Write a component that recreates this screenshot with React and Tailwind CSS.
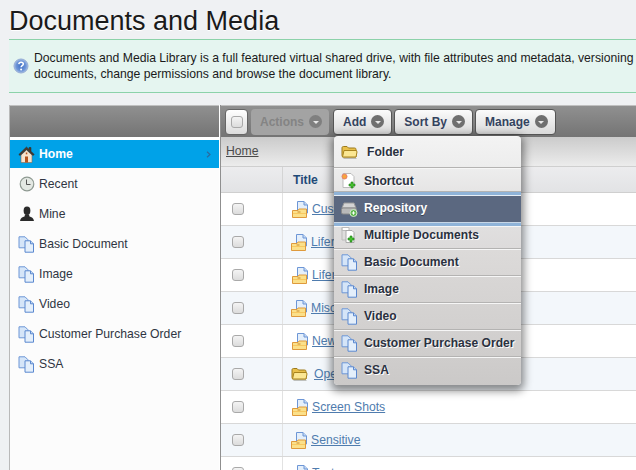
import { Fragment } from 'react';

const SIDEBAR = [
  { label: 'Recent', icon: 'clock' },
  { label: 'Mine', icon: 'person' },
  { label: 'Basic Document', icon: 'docs' },
  { label: 'Image', icon: 'docs' },
  { label: 'Video', icon: 'docs' },
  { label: 'Customer Purchase Order', icon: 'docs' },
  { label: 'SSA', icon: 'docs' },
];

const ROWS = [
  { label: 'Customer', shift: 'ml-[9px]', gap: 'ml-[4px]' },
  { label: 'Liferay', shift: 'ml-[8px]', gap: 'ml-[4px]' },
  { label: 'Liferay', shift: 'ml-[9px]', gap: 'ml-[4px]' },
  { label: 'Misc', shift: 'ml-[8px]', gap: 'ml-[4px]' },
  { label: 'New', shift: 'ml-[9px]', gap: 'ml-[4px]' },
  { label: 'Open', shift: 'ml-[8px]', gap: 'ml-[6px]', plain: true },
  { label: 'Screen Shots', shift: 'ml-[9px]', gap: 'ml-[4px]' },
  { label: 'Sensitive', shift: 'ml-[8px]', gap: 'ml-[4px]' },
  { label: 'Test', shift: 'ml-[9px]', gap: 'ml-[4px]' },
];

const MENU = [
  { label: 'Folder', icon: 'folder', cls: 'h-[32px] from-[#f3f3f3] to-[#ededed]', pad: 'pl-[1px] gap-[9px]' },
  { label: 'Shortcut', icon: 'shortcut', cls: 'h-[24px] pt-[2px] from-[#ededed] to-[#e6e5e5]' },
  { label: 'Repository', icon: 'repo', active: true },
  { label: 'Multiple Documents', icon: 'multi', cls: 'h-[23px] pb-[4px] from-[#e0dfdf] to-[#dddbdb]' },
  { label: 'Basic Document', icon: 'docs', cls: 'h-[27px] from-[#dcdad9] to-[#d9d7d6]' },
  { label: 'Image', icon: 'docs', cls: 'h-[27px] from-[#d8d6d5] to-[#d5d3d2]' },
  { label: 'Video', icon: 'docs', cls: 'h-[27px] from-[#d5d3d2] to-[#d2d0cf]' },
  { label: 'Customer Purchase Order', icon: 'docs', cls: 'h-[27px] from-[#d2d0cf] to-[#cfcdcc]' },
  { label: 'SSA', icon: 'docs', cls: 'h-[28px] pb-[3px] from-[#cfcdcc] to-[#cbc9c8]', last: true },
];

function Docs() {
  return (
    <svg width="17" height="17" viewBox="0 0 17 17" className="shrink-0">
      <path d="M1 .8h6l3 3v8H1z" fill="#d5e5f8" stroke="#6d96d6" />
      <path d="M7 4.800h5.500l3 3v8.400H7z" fill="#e4effb" stroke="#5b88cf" />
      <path d="M12.500 4.800v3h3" fill="#c3d8f3" stroke="#5b88cf" />
    </svg>
  );
}

function Folder() {
  return (
    <svg width="17" height="14" viewBox="0 0 17 14" className="shrink-0">
      <path d="M1 3c0-1 .5-1.500 1.500-1.500h3.500l1.500 1.500h6c1 0 1.500.5 1.500 1.500v7.500H2.500C1.500 12 1 11.500 1 10.500z" fill="#e9c04b" stroke="#9c7a1d" />
      <path d="M1.500 12 3 5.500h12.500L16 7l-1 5z" fill="#fbe793" stroke="#a8841f" />
      <path d="M2.500 13.500h13" stroke="#8a8a80" strokeOpacity=".5" />
    </svg>
  );
}

function DocFolder() {
  return (
    <svg width="16" height="17" viewBox="0 0 16 17" className="shrink-0">
      <path d="M5.500.5h6.500l3.500 3.500v8H5.500z" fill="#e4effb" stroke="#6d96d6" />
      <path d="M12 .5V4h3.500" fill="#c3d8f3" stroke="#6d96d6" />
      <path d="M.5 9.500h5.500l1-1.500h7.500v8.500H.5z" fill="#fbe08a" stroke="#df9a3c" />
      <path d="M1 12.500h13" stroke="#f7c860" />
      <path d="M5.500 11h3" stroke="#c98a30" />
    </svg>
  );
}

function Plus({ x = 9, y = 9 }) {
  return (
    <path
      d={`M${x + 2} ${y}h2v2h2v2h-2v2h-2v-2h-2v-2h2z`}
      fill="#47c12f"
      stroke="#1d7a16"
      strokeWidth=".6"
    />
  );
}

function Shortcut() {
  return (
    <svg width="17" height="17" viewBox="0 0 17 17" className="shrink-0">
      <path d="M2 .5h8l3 3v11H2z" fill="#fff" stroke="#bbb" />
      <circle cx="3.500" cy="3.500" r="2.500" fill="#f6a63c" stroke="#e87f6b" />
      <Plus x={8} y={9} />
    </svg>
  );
}

function Multi() {
  return (
    <svg width="17" height="17" viewBox="0 0 17 17" className="shrink-0">
      <path d="M1 .5h7v3H1z" fill="#fff" stroke="#bbb" />
      <path d="M1 .5v12.500h4" fill="none" stroke="#bbb" />
      <path d="M5 3.500h6l2 2v10H5z" fill="#fff" stroke="#aaa" />
      <Plus x={7} y={9} />
    </svg>
  );
}

function Repo() {
  return (
    <svg width="17" height="17" viewBox="0 0 17 17" className="shrink-0">
      <path d="M3 3h10l2 5H1z" fill="#d4d4d4" stroke="#999" />
      <rect x=".5" y="8" width="15" height="6" rx="1.500" fill="#b9b9b9" stroke="#8a8a8a" />
      <circle cx="12.500" cy="13" r="3.500" fill="#5cb54c" stroke="#cfe8c8" />
      <path d="M10.800 13h3.400M12.500 11.300v3.400" stroke="#fff" />
    </svg>
  );
}

function House() {
  return (
    <svg width="17" height="17" viewBox="0 0 17 17" className="shrink-0">
      <path d="M3 9 8.500 4 14 9v7.500H3z" fill="#f6e3cd" stroke="#8a6a50" strokeWidth=".6" />
      <path d="M.8 8.500 8.500 1l2.500 2.400V1.500h2v3.800l3.200 3.200-1.200 1L8.500 3.500 2 9.500z" fill="#4a3a2e" stroke="#2e241c" strokeWidth=".5" />
      <rect x="7" y="10.500" width="3" height="6" fill="#b5541f" />
      <rect x="7.800" y="6.500" width="1.500" height="1.800" fill="#b5541f" />
    </svg>
  );
}

function Clock() {
  return (
    <svg width="16" height="16" viewBox="0 0 16 16" className="shrink-0">
      <circle cx="8" cy="8" r="6.800" fill="#e3e8e3" stroke="#8f9a92" strokeWidth="1.200" />
      <path d="M7.500 3.500V8.500h4" fill="none" stroke="#555" />
    </svg>
  );
}

function Person() {
  return (
    <svg width="16" height="16" viewBox="0 0 16 16" className="shrink-0">
      <ellipse cx="8" cy="4.800" rx="3.400" ry="4.200" fill="#2b2b2b" />
      <path d="M6 8.500h4l.5 2c2 .4 4 1.300 4.500 4.500H1c.5-3.200 2.500-4.100 4.500-4.500z" fill="#2b2b2b" />
    </svg>
  );
}

function Icon({ name }) {
  if (name === 'house') return <House />;
  if (name === 'clock') return <Clock />;
  if (name === 'person') return <Person />;
  if (name === 'folder') return <Folder />;
  if (name === 'shortcut') return <Shortcut />;
  if (name === 'repo') return <Repo />;
  if (name === 'multi') return <Multi />;
  return <Docs />;
}

function Help() {
  return (
    <svg width="16" height="16" viewBox="0 0 16 16" className="shrink-0">
      <defs>
        <radialGradient id="help" cx="50%" cy="50%" r="55%">
          <stop offset="0" stopColor="#3f6fc4" />
          <stop offset=".65" stopColor="#6f97d8" />
          <stop offset="1" stopColor="#c3d3ec" />
        </radialGradient>
      </defs>
      <circle cx="8" cy="8" r="7" fill="url(#help)" stroke="#93abd4" />
      <path d="M5.800 6.200c.2-1.500 1.200-2 2.300-2 1.300 0 2.200.8 2.200 1.900 0 1.600-2.200 1.600-2.200 3.200" fill="none" stroke="#fff" strokeWidth="1.500" />
      <circle cx="8.100" cy="11.500" r="1" fill="#fff" />
    </svg>
  );
}

function Caret({ dim }) {
  return (
    <span className={`flex h-[13px] w-[13px] shrink-0 items-center justify-center rounded-full ${dim ? 'bg-[#7f7f7f]' : 'bg-[#6f6f6f]'}`}>
      <span className="mt-[1px] h-0 w-0 border-x-[3px] border-t-[3px] border-x-transparent border-t-[#e8e8e8]" />
    </span>
  );
}

function ToolButton({ label }) {
  return (
    <div className="flex h-[26px] items-center gap-[5px] rounded-[4px] border border-[#555] bg-gradient-to-b from-[#fbfbfb] to-[#d9d9d9] pl-[9px] pr-[7px] text-[12px] font-bold text-[#34435f]">
      {label}
      <Caret />
    </div>
  );
}

function Checkbox() {
  return <span className="block h-[12px] w-[12px] rounded-[3px] border border-[#a9a9a9] bg-gradient-to-b from-[#f4f4f4] to-[#dcdcdc]" />;
}

function Sidebar() {
  return (
    <div className="flex w-[209px] flex-1 flex-col border-t-[3px] border-white bg-[#fcfcfc]">
      <div className="flex h-[28px] items-center bg-[#00a2e8] pl-[8px] pr-[8px]">
        <House />
        <span className="ml-[4px] text-[12.2px] font-bold text-white">Home</span>
        <svg width="5" height="7" viewBox="0 0 5 7" className="ml-auto">
          <path d="M1 .7 4 3.500 1 6.300" fill="none" stroke="#2a6a9f" strokeWidth="1.200" />
        </svg>
      </div>
      <div className="flex flex-col">
        {SIDEBAR.map((item) => (
          <div key={item.label} className="flex h-[30px] translate-y-[1px] items-center pl-[8px] text-[12.2px] text-[#2f3542]">
            <span className="flex w-[17px] justify-center"><Icon name={item.icon} /></span>
            <span className="ml-[4px]">{item.label}</span>
          </div>
        ))}
      </div>
    </div>
  );
}

function DocTable() {
  return (
    <div className="flex min-w-0 flex-1 flex-col">
      <div className="flex h-[30px] items-center border-b border-[#cfcfcf] bg-gradient-to-b from-[#cbcbcb] to-[#ececec] pl-[5px] text-[12.2px] text-[#4a4a4a]">
        <span className="underline">Home</span>
      </div>
      <div className="grid h-[26px] grid-cols-[62px_1fr] border-b border-[#cfcfcf] bg-gradient-to-b from-[#ececee] to-[#e2e3e5] text-[12.2px] font-bold text-[#1f4a78]">
        <div className="border-r border-[#d4d4d4]" />
        <div className="flex items-center pl-[10px] pt-[2px]">Title</div>
      </div>
      {ROWS.map((row, i) => (
        <div
          key={i}
          className={`grid h-[33px] shrink-0 grid-cols-[62px_1fr] border-b border-[#d8d8d8] ${i % 2 ? 'bg-[#f3f7fb]' : 'bg-white'}`}
        >
          <div className="flex items-center border-r border-[#e2e2e2] pl-[11px]">
            <Checkbox />
          </div>
          <div className="flex items-center text-[12.2px] text-[#4f7cae]">
            <span className={row.shift}>{row.plain ? <Folder /> : <DocFolder />}</span>
            <span className={`${row.gap} underline`}>{row.label}</span>
          </div>
        </div>
      ))}
    </div>
  );
}

function AddMenu() {
  return (
    <div className="absolute left-[334px] top-[136px] z-10 flex w-[187px] flex-col overflow-hidden rounded-[4px] shadow-[0_3px_9px_3px_rgba(0,0,0,0.45)]">
      {MENU.map((item) => (
        <Fragment key={item.label}>
          {item.active ? (
            <div className="flex h-[34px] items-center gap-[6px] border-y-[3px] border-[#8fb3d8] bg-[#5b6880] pb-[2px] pl-[7px] text-[12.1px] font-bold text-white shadow-[inset_0_1px_0_#e6edf5,inset_0_-1px_0_#c7d6e6] [text-shadow:0_1px_0_rgba(0,0,0,0.4)]">
              <Icon name={item.icon} />
              {item.label}
            </div>
          ) : (
            <div
              className={`flex items-center border-t border-t-[#f6f6f6] bg-gradient-to-b pl-[7px] text-[12.1px] font-bold text-[#2b3140] [text-shadow:1px_1px_0_#fff] ${item.cls} ${item.last ? '' : 'border-b border-b-[#b4b3b2]'} ${item.pad ?? 'gap-[6px]'}`}
            >
              <Icon name={item.icon} />
              {item.label}
            </div>
          )}
        </Fragment>
      ))}
    </div>
  );
}

export default function App() {
  return (
    <div className="relative h-[470px] w-[636px] overflow-hidden bg-[#eff1f3] font-['Liberation_Sans',Arial,sans-serif] text-[#1a1a1a]">
      <h1 className="pl-[9px] pt-[3px] text-[27px] leading-[36px] [text-shadow:0_1px_0_#fff]">Documents and Media</h1>
      <div className="ml-[9px] flex h-[54px] items-center border-y border-[#8cd2a9] bg-[#e5f5f0] pl-[4px] text-[12.2px] leading-[16px]">
        <Help />
        <p className="ml-[5px] whitespace-nowrap">
          Documents and Media Library is a full featured virtual shared drive, with file attributes and metadata, versioning
          <br />
          documents, change permissions and browse the document library.
        </p>
      </div>

      <div className="ml-[9px] mt-[12px] flex h-[366px] border-l border-[#b9b9b9]">
        <div className="flex w-[209px] shrink-0 flex-col">
          <div className="h-[32px] border-t border-[#c0c0c0] bg-gradient-to-b from-[#909090] to-[#747474]" />
          <Sidebar />
        </div>
        <div className="w-[1px] shrink-0 bg-white" />
        <div className="flex min-w-0 flex-1 flex-col border-l border-[#8f8f8f]">
          <div className="flex h-[32px] shrink-0 items-center gap-[2px] border-t border-[#c0c0c0] bg-gradient-to-b from-[#909090] to-[#747474] pl-[4px]">
            <div className="mr-[1px] flex h-[26px] w-[23px] items-center justify-center rounded-[4px] border border-[#666] bg-gradient-to-b from-white to-[#dcdcdc]">
              <Checkbox />
            </div>
            <div className="mr-[2px] flex h-[26px] items-center gap-[5px] rounded-[4px] bg-[#a3a3a3] pl-[9px] pr-[7px] text-[12px] font-bold text-[#848484]">
              Actions
              <Caret dim />
            </div>
            <ToolButton label="Add" />
            <ToolButton label="Sort By" />
            <ToolButton label="Manage" />
          </div>
          <DocTable />
        </div>
      </div>

      <AddMenu />
    </div>
  );
}
